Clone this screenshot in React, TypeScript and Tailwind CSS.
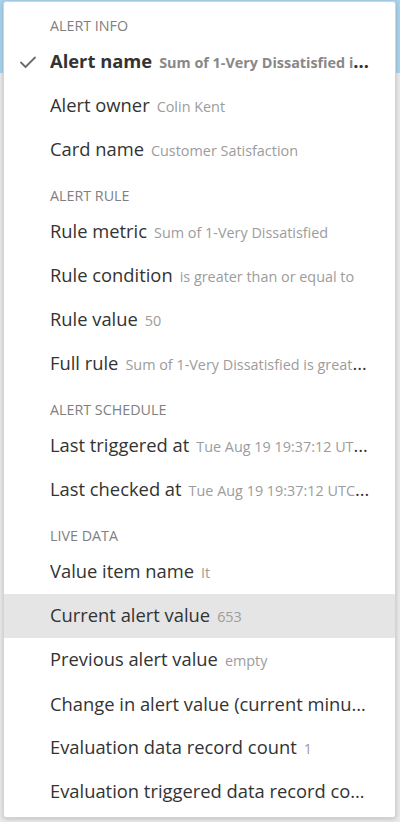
import React from 'react';

type Row =
  | { kind: 'header'; label: string }
  | { kind: 'item'; label: string; value: string; selected?: boolean; active?: boolean };

const rows: Row[] = [
  { kind: 'header', label: 'Alert info' },
  { kind: 'item', label: 'Alert name', value: 'Sum of 1-Very Dissatisfied is greater than or equal to 50', selected: true },
  { kind: 'item', label: 'Alert owner', value: 'Colin Kent' },
  { kind: 'item', label: 'Card name', value: 'Customer Satisfaction' },
  { kind: 'header', label: 'Alert rule' },
  { kind: 'item', label: 'Rule metric', value: 'Sum of 1-Very Dissatisfied' },
  { kind: 'item', label: 'Rule condition', value: 'is greater than or equal to' },
  { kind: 'item', label: 'Rule value', value: '50' },
  { kind: 'item', label: 'Full rule', value: 'Sum of 1-Very Dissatisfied is greater than or equal to 50' },
  { kind: 'header', label: 'Alert schedule' },
  { kind: 'item', label: 'Last triggered at', value: 'Tue Aug 19 19:37:12 UTC 2025' },
  { kind: 'item', label: 'Last checked at', value: 'Tue Aug 19 19:37:12 UTC 2025' },
  { kind: 'header', label: 'Live data' },
  { kind: 'item', label: 'Value item name', value: 'It' },
  { kind: 'item', label: 'Current alert value', value: '653', active: true },
  { kind: 'item', label: 'Previous alert value', value: 'empty' },
  { kind: 'item', label: 'Change in alert value (current minus previous)', value: '' },
  { kind: 'item', label: 'Evaluation data record count', value: '1' },
  { kind: 'item', label: 'Evaluation triggered data record count', value: '1' },
];

const CheckIcon = () => (
  <svg width="18" height="14" viewBox="0 0 18 14" fill="none" className="text-[#6b6b6b]">
    <path d="M2 7.5L6.5 12L16 2.5" stroke="currentColor" strokeWidth="1.8" strokeLinecap="round" strokeLinejoin="round" />
  </svg>
);

export default function App() {
  return (
    <div className="relative w-[400px] h-[822px] overflow-hidden bg-[#e9e9e9] font-['Open_Sans',sans-serif]">
      <div className="h-[73px] bg-[#a9d2ec]" />

      {/* dropdown menu */}
      <div className="absolute left-[3px] top-[1px] w-[393px] h-[817px] bg-white border border-[#d4d4d4] rounded-[3px] shadow-[0_1px_4px_rgba(0,0,0,0.18)] pb-[5px]">
        {rows.map((row, i) =>
          row.kind === 'header' ? (
            <div
              key={i}
              className="h-[38px] pt-[14px] pl-[46px] text-[14.3px] leading-[20px] uppercase text-[#808080]"
            >
              {row.label}
            </div>
          ) : (
            <div
              key={i}
              className={`relative h-[44px] flex items-center pl-[46px] pr-[22px] ${row.active ? 'bg-[#e5e5e5]' : ''}`}
            >
              {row.selected && (
                <span className="absolute left-[15px] top-[15px]">
                  <CheckIcon />
                </span>
              )}
              <div
                className={`truncate min-w-0 w-full leading-[24px] text-[18.35px] text-[#333333] ${row.selected ? 'font-bold' : ''}`}
              >
                {row.label}
                {row.value && (
                  <span
                    className={`ml-[7px] text-[14.4px] ${row.selected ? 'text-[#888888]' : 'text-[#9c9c9c]'}`}
                  >
                    {row.value}
                  </span>
                )}
              </div>
            </div>
          )
        )}
      </div>
    </div>
  );
}
